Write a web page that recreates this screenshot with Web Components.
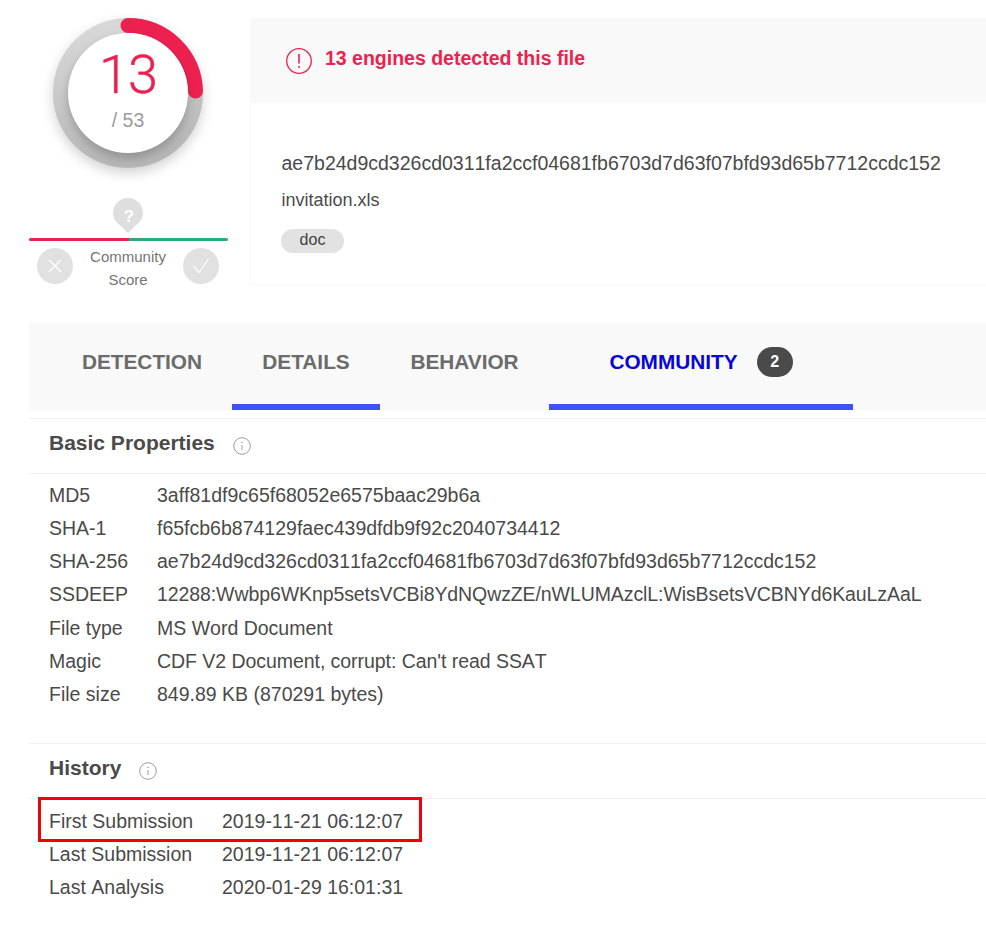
<!DOCTYPE html>
<html>
<head>
<meta charset="utf-8">
<style>
  html, body { margin: 0; background: #fff; }
  body { font-family: "Liberation Sans", Arial, sans-serif; color: #4a4a4a; width: 986px; height: 929px; overflow: hidden; }
</style>
</head>
<body>
<report-page>
  <score-panel slot="score"></score-panel>
  <file-summary slot="summary"></file-summary>
  <tab-bar slot="tabs"></tab-bar>
  <info-section slot="sections" heading="Basic Properties" label-width="108" pad-top="5" pad-bottom="32">
    <prop-row label="MD5">3aff81df9c65f68052e6575baac29b6a</prop-row>
    <prop-row label="SHA-1">f65fcb6b874129faec439dfdb9f92c2040734412</prop-row>
    <prop-row label="SHA-256">ae7b24d9cd326cd0311fa2ccf04681fb6703d7d63f07bfd93d65b7712ccdc152</prop-row>
    <prop-row label="SSDEEP"><span style="letter-spacing:-0.090px">12288:Wwbp6WKnp5setsVCBi8YdNQwzZE/nWLUMAzclL:WisBsetsVCBNYd6KauLzAaL</span></prop-row>
    <prop-row label="File type">MS Word Document</prop-row>
    <prop-row label="Magic"><span style="letter-spacing:-0.050px">CDF V2 Document, corrupt: Can't read SSAT</span></prop-row>
    <prop-row label="File size">849.89 KB (870291 bytes)</prop-row>
  </info-section>
  <info-section slot="sections" heading="History" label-width="173" pad-top="6" pad-bottom="0">
    <prop-row label="First Submission" marked>2019-11-21 06:12:07</prop-row>
    <prop-row label="Last Submission">2019-11-21 06:12:07</prop-row>
    <prop-row label="Last Analysis">2020-01-29 16:01:31</prop-row>
  </info-section>
</report-page>

<script>
class ReportPage extends HTMLElement {
  constructor() {
    super();
    this.attachShadow({ mode: 'open' }).innerHTML = `
<style>
  :host { display: block; padding-top: 18px; }
  #top { display: flex; height: 267px; }
  #tabs { display: block; margin: 38px 0 0 29px; }
  #sections { display: block; margin: 8px 0 0 29px; }
</style>
<div id="top">
  <slot name="score"></slot>
  <slot name="summary"></slot>
</div>
<div id="tabs"><slot name="tabs"></slot></div>
<div id="sections"><slot name="sections"></slot></div>`;
  }
}
customElements.define('report-page', ReportPage);

class ScorePanel extends HTMLElement {
  constructor() {
    super();
    this.attachShadow({ mode: 'open' }).innerHTML = `
<style>
  :host { display: flex; flex-direction: column; align-items: center; width: 250px; box-sizing: border-box; padding: 0 1px 0 7px; flex: none; }
  #gauge { position: relative; width: 150px; height: 150px; flex: none; }
  #gauge svg { position: absolute; left: 0; top: 0; overflow: visible; }
  #count { position: absolute; left: 15px; top: 15px; width: 120px; height: 120px; display: flex; flex-direction: column; align-items: center; }
  #num { font-family: Roboto, "Liberation Sans", sans-serif; font-weight: 300; -webkit-text-stroke: 0.4px #ed2150; font-size: 54px; line-height: 62px; margin-top: 11px; letter-spacing: -1px; color: #ed2150; }
  #total { font-size: 19.500px; line-height: 22px; margin-top: 3px; color: #9b9b9b; }
  #pin { margin-top: 30px; height: 36px; flex: none; }
  #bar { width: 199px; height: 3px; flex: none; display: flex; margin: 4px 0 0 1px; }
  #bar i { flex: 1; background: #ed2150; border-radius: 2px 0 0 2px; }
  #bar b { flex: 1; background: #2bab78; border-radius: 0 2px 2px 0; }
  #foot { display: flex; justify-content: space-between; align-items: flex-start; width: 182px; margin-top: 6px; }
  .vote { width: 36px; height: 36px; border-radius: 50%; background: #e1e1e1; display: flex; align-items: center; justify-content: center; margin-top: 1px; }
  #label { font-size: 15px; line-height: 22.500px; margin-top: -1px; text-align: center; color: #757575; width: 100px; }
</style>
<div id="gauge">
  <svg width="150" height="150" viewBox="0 0 150 150">
    <defs>
      <linearGradient id="ring" x1="0" y1="0" x2="0.2" y2="1">
        <stop offset="0" stop-color="#dcdcdc"/>
        <stop offset="1" stop-color="#b6b6b6"/>
      </linearGradient>
      <filter id="soft" x="-30%" y="-30%" width="160%" height="160%"><feGaussianBlur stdDeviation="7"/></filter>
      <filter id="soft2" x="-30%" y="-30%" width="160%" height="160%"><feGaussianBlur stdDeviation="5"/></filter>
    </defs>
    <circle cx="75" cy="80" r="74" fill="#000" opacity="0.2" filter="url(#soft)"/>
    <circle cx="75" cy="75" r="75" fill="url(#ring)"/>
    <path d="M75 7.500A67.500 67.500 0 0 1 142.500 73" fill="none" stroke="#ed2150" stroke-width="15" stroke-linecap="round"/>
    <circle cx="75" cy="80" r="60" fill="#000" opacity="0.2" filter="url(#soft2)"/>
    <circle cx="75" cy="75" r="60" fill="#fff"/>
  </svg>
  <div id="count"><span id="num">13</span><span id="total">/ 53</span></div>
</div>
<svg id="pin" width="30" height="36" viewBox="0 0 30 36">
  <path d="M15 0A15 15 0 0 1 30 15C30 22 25 26 21 29L15 35L9 29C5 26 0 22 0 15A15 15 0 0 1 15 0Z" fill="#dedede"/>
  <text x="16" y="24" font-family="Liberation Sans" font-weight="700" font-size="17" fill="#fff" text-anchor="middle">?</text>
</svg>
<div id="bar"><i></i><b></b></div>
<div id="foot">
  <div class="vote"><svg width="16" height="16" viewBox="0 0 16 16"><path d="M2 2L14 14M14 2L2 14" stroke="#fff" stroke-width="1.200" fill="none"/></svg></div>
  <div id="label">Community<br>Score</div>
  <div class="vote"><svg width="20" height="18" viewBox="0 0 20 18"><path d="M2.500 9L8 15.500L17.500 2" stroke="#fff" stroke-width="1.200" fill="none"/></svg></div>
</div>`;
  }
}
customElements.define('score-panel', ScorePanel);

class FileSummary extends HTMLElement {
  constructor() {
    super();
    this.attachShadow({ mode: 'open' }).innerHTML = `
<style>
  :host { display: block; flex: 1; min-width: 0; box-shadow: inset 1px 0 0 #f8f8f8, inset 0 -1px 0 #f8f8f8; }
  #alert { height: 85px; background: #f9f9f9; display: flex; align-items: center; padding-left: 36px; gap: 13px; color: #ed2150; font-weight: 700; font-size: 19.500px; }
  #alert span { position: relative; top: -2px; }
  #body { padding: 48px 0 0 31.500px; font-size: 19.500px; font-kerning: none; }
  #hash { line-height: 24px; white-space: nowrap; }
  #name { line-height: 24px; margin-top: 13px; font-size: 18px; }
  #tag { display: block; margin: 17px 0 0 -0.500px; background: #e2e2e2; border-radius: 12px; width: 63px; height: 24px; line-height: 21px; text-align: center; font-size: 16px; color: #3f3f3f; }
</style>
<div id="alert">
  <svg width="26" height="26" viewBox="0 0 26 26"><circle cx="13" cy="13" r="12.300" fill="none" stroke="#ed2150" stroke-width="1.300"/><path d="M13 6V15.500" stroke="#ed2150" stroke-width="1.600" fill="none"/><circle cx="13" cy="19" r="1" fill="#ed2150"/></svg>
  <span>13 engines detected this file</span>
</div>
<div id="body">
  <div id="hash">ae7b24d9cd326cd0311fa2ccf04681fb6703d7d63f07bfd93d65b7712ccdc152</div>
  <div id="name">invitation.xls</div>
  <div id="tag">doc</div>
</div>`;
  }
}
customElements.define('file-summary', FileSummary);

class TabBar extends HTMLElement {
  constructor() {
    super();
    this.attachShadow({ mode: 'open' }).innerHTML = `
<style>
  :host { display: flex; height: 87px; background: #f9f9f9; font-size: 20.800px; font-weight: 700; color: #6b6b6b; }
  .tab { display: flex; align-items: center; justify-content: center; box-sizing: border-box; height: 87px; padding-bottom: 10px; flex: none; }
  .on { border-bottom: 6px solid #3f51f5; padding-bottom: 4px; }
  #first { padding-left: 23px; }
  #community { color: #0505d8; gap: 19px; }
  #badge { background: #4a4a4a; color: #fff; width: 36px; height: 30px; border-radius: 15px; font-size: 16px; display: flex; align-items: center; justify-content: center; }
</style>
<div class="tab" id="first" style="width:203px">DETECTION</div>
<div class="tab on" style="width:148px">DETAILS</div>
<div class="tab" style="width:169px">BEHAVIOR</div>
<div class="tab on" id="community" style="width:304px"><span>COMMUNITY</span><span id="badge">2</span></div>`;
  }
}
customElements.define('tab-bar', TabBar);

class InfoSection extends HTMLElement {
  constructor() {
    super();
    this.attachShadow({ mode: 'open' }).innerHTML = `
<style>
  :host { display: block; border-top: 1px solid #f0f0f0; }
  #head { display: flex; align-items: center; gap: 18px; height: 54px; padding-left: 20px; border-bottom: 1px solid #f0f0f0; font-size: 21px; font-weight: 700; color: #4a4a4a; }
  #title { position: relative; top: -3px; }
  #rows { display: block; padding-left: 20px; }
</style>
<div id="head"><span id="title"></span>
  <svg width="18" height="18" viewBox="0 0 18 18"><circle cx="9" cy="9" r="8.300" fill="none" stroke="#9d9d9d" stroke-width="1"/><path d="M9 8V13" stroke="#9d9d9d" stroke-width="1"/><circle cx="9" cy="5.500" r="0.800" fill="#9d9d9d"/></svg>
</div>
<div id="rows"><slot></slot></div>`;
  }

  connectedCallback() {
    const rows = this.shadowRoot.querySelector('#rows');
    this.shadowRoot.querySelector('#title').textContent = this.getAttribute('heading');
    rows.style.paddingTop = this.getAttribute('pad-top') + 'px';
    rows.style.paddingBottom = this.getAttribute('pad-bottom') + 'px';
    this.style.setProperty('--label-width', this.getAttribute('label-width') + 'px');
  }
}
customElements.define('info-section', InfoSection);

class PropRow extends HTMLElement {
  static get observedAttributes() {
    return ['label'];
  }

  constructor() {
    super();
    this.attachShadow({ mode: 'open' }).innerHTML = `
<style>
  :host { display: flex; position: relative; height: 33.170px; line-height: 33.170px; font-size: 19.500px; color: #4a4a4a; white-space: nowrap; font-kerning: none; }
  #label { width: var(--label-width); flex: none; }
  #mark { display: none; position: absolute; box-sizing: border-box; left: -11px; top: -8px; width: 384px; height: 45px; border: 3px solid #f00008; }
  :host([marked]) #mark { display: block; }
</style>
<div id="label"></div>
<div><slot></slot></div>
<div id="mark"></div>`;
  }

  attributeChangedCallback(name, oldValue, newValue) {
    if (name == 'label') {
      this.shadowRoot.querySelector('#label').textContent = newValue;
    }
  }
}
customElements.define('prop-row', PropRow);
</script>
</body>
</html>
